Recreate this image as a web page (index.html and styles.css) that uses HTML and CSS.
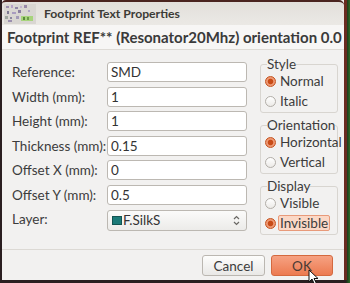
FILE: index.html
```html
<!DOCTYPE html>
<html>
<head>
<meta charset="utf-8">
<link rel="stylesheet" href="styles.css">
</head>
<body>
<div class="desk">
  <div class="window">
    <div class="titlebar">
      <svg class="appicon" width="32" height="20" viewBox="0 0 32 20">
        <rect width="32" height="20" fill="#d9d6d2"/>
        <rect x="2" y="2" width="3" height="2" fill="#9c8fb0"/>
        <rect x="7" y="1" width="2" height="3" fill="#b7a3c6"/>
        <rect x="11" y="3" width="3" height="2" fill="#8f86a6"/>
        <rect x="16" y="2" width="2" height="2" fill="#c4b3cf"/>
        <rect x="20" y="1" width="3" height="3" fill="#9a8aa9"/>
        <rect x="3" y="7" width="2" height="3" fill="#7f7a92"/>
        <rect x="8" y="8" width="4" height="2" fill="#a99cc0"/>
        <rect x="14" y="6" width="3" height="3" fill="#8c7fa1"/>
        <rect x="24" y="6" width="2" height="2" fill="#b0a4c4"/>
        <rect x="1" y="12" width="3" height="3" fill="#9fa7a0"/>
        <rect x="6" y="13" width="2" height="2" fill="#8b86a0"/>
        <rect x="12" y="12" width="3" height="3" fill="#a49bb8"/>
        <rect x="17" y="12" width="12" height="5" fill="#a7d47c"/>
        <rect x="19" y="13" width="2" height="3" fill="#5a8a3c"/>
        <rect x="23" y="13" width="2" height="3" fill="#6c9c48"/>
        <rect x="4" y="16" width="4" height="2" fill="#9c90b0"/>
      </svg>
      <span class="title">Footprint Text Properties</span>
    </div>
    <div class="header">Footprint REF** (Resonator20Mhz) orientation 0.0</div>
    <div class="content">
      <div class="form">
        <div class="row"><span class="label">Reference:</span><span class="input">SMD</span></div>
        <div class="row"><span class="label">Width (mm):</span><span class="input">1</span></div>
        <div class="row"><span class="label">Height (mm):</span><span class="input">1</span></div>
        <div class="row"><span class="label">Thickness (mm):</span><span class="input">0.15</span></div>
        <div class="row"><span class="label">Offset X (mm):</span><span class="input">0</span></div>
        <div class="row"><span class="label">Offset Y (mm):</span><span class="input">0.5</span></div>
        <div class="row"><span class="label">Layer:</span>
          <span class="combo"><span class="swatch"></span><span class="combo-text">F.SilkS</span>
            <svg class="spin" width="7" height="11" viewBox="0 0 7 11"><path d="M1 4 L3.5 1.5 L6 4" fill="none" stroke="#6a6864" stroke-width="1.2"/><path d="M1 7 L3.5 9.5 L6 7" fill="none" stroke="#6a6864" stroke-width="1.2"/></svg>
          </span>
        </div>
      </div>
      <div class="side">
        <fieldset class="group">
          <legend>Style</legend>
          <div class="radio-row"><span class="radio on"></span><span>Normal</span></div>
          <div class="radio-row"><span class="radio"></span><span>Italic</span></div>
        </fieldset>
        <fieldset class="group">
          <legend>Orientation</legend>
          <div class="radio-row"><span class="radio on"></span><span>Horizontal</span></div>
          <div class="radio-row"><span class="radio"></span><span>Vertical</span></div>
        </fieldset>
        <fieldset class="group">
          <legend>Display</legend>
          <div class="radio-row"><span class="radio"></span><span>Visible</span></div>
          <div class="radio-row"><span class="radio on"></span><span class="focus">Invisible</span></div>
        </fieldset>
      </div>
    </div>
    <div class="buttons">
      <span class="btn cancel">Cancel</span>
      <span class="btn ok">OK</span>
    </div>
  </div>
  <svg class="cursor" width="12" height="17" viewBox="0 0 12 17"><path d="M1 1 L1 13 L4 10 L6.5 15.5 L8.5 14.5 L6 9.5 L10 9.5 Z" fill="#ffffff" stroke="#111111" stroke-width="1" stroke-linejoin="round"/></svg>
</div>
</body>
</html>
```

FILE: styles.css
```css
html, body {
  margin: 0;
  padding: 0;
}
body {
  width: 350px;
  height: 283px;
  overflow: hidden;
  background: #221b1d;
  font-family: Lato, "Liberation Sans", sans-serif;
  color: #3c3c3c;
}
.desk {
  position: relative;
  width: 350px;
  height: 283px;
  background: linear-gradient(90deg, #2a1e20 0, #2a1e20 346px, #1d3a1c 347px, #2e6a25 350px);
}
.window {
  margin-left: 2px;
  width: 342px;
  height: 280px;
  border-right: 3px solid #6a2a20;
  display: flex;
  flex-direction: column;
  background: #f2f1f0;
  box-sizing: content-box;
}
.titlebar {
  height: 25px;
  box-sizing: border-box;
  border-top: 2px solid #4a2420;
  background: linear-gradient(#e2dfdb, #ebe9e5);
  border-radius: 4px 5px 0 0;
  display: flex;
  align-items: center;
  padding-left: 2px;
}
.appicon {
  display: block;
  margin-top: 1px;
}
.title {
  margin-left: 8px;
  font-weight: bold;
  font-size: 12.2px;
  color: #3c3b37;
  white-space: nowrap;
}
.header {
  height: 25px;
  box-sizing: border-box;
  background: #f7f6f5;
  border-bottom: 1px solid #dedbd6;
  padding-left: 5px;
  display: flex;
  align-items: center;
  font-weight: bold;
  font-size: 15px;
  color: #3a3a3a;
  white-space: nowrap;
}
.content {
  flex: 1;
  display: flex;
  justify-content: space-between;
  border-bottom: 1px solid #dcd9d4;
}
.form {
  padding-top: 12px;
  padding-left: 10px;
  display: flex;
  flex-direction: column;
  gap: 4.5px;
}
.row {
  display: flex;
  align-items: center;
  height: 20px;
  font-size: 13.5px;
}
.label {
  width: 95px;
  flex: none;
  white-space: nowrap;
}
.input {
  width: 140px;
  height: 20px;
  box-sizing: border-box;
  background: #ffffff;
  border: 1px solid #bcb8b2;
  border-radius: 3px;
  padding-left: 3px;
  display: flex;
  align-items: center;
  font-size: 13.5px;
  color: #333333;
}
.combo {
  width: 140px;
  height: 21px;
  margin-top: 2px;
  box-sizing: border-box;
  background: linear-gradient(#fbfbfa, #ecebe9);
  border: 1px solid #bcb8b2;
  border-radius: 3px;
  padding-left: 4px;
  padding-right: 6px;
  display: flex;
  align-items: center;
  color: #333333;
}
.swatch {
  width: 10px;
  height: 9px;
  background: #1b7a78;
  border: 1px solid #125452;
  box-sizing: border-box;
  margin-right: 1px;
}
.combo-text {
  flex: 1;
}
.spin {
  display: block;
}
.side {
  width: 78px;
  padding-top: 7px;
  margin-right: 6px;
  display: flex;
  flex-direction: column;
  gap: 5px;
}
.group {
  margin: 0;
  padding: 0 0 1px 4px;
  border: 1px solid #d8d5d0;
  border-radius: 3px;
  min-width: 0;
}
.group legend {
  padding: 0;
  margin-left: 2px;
  font-size: 13.5px;
  line-height: 14px;
  color: #3c3c3c;
}
.radio-row {
  height: 20px;
  display: flex;
  align-items: center;
  font-size: 13.5px;
  gap: 4px;
  white-space: nowrap;
}
.radio {
  width: 11px;
  height: 11px;
  box-sizing: border-box;
  border-radius: 50%;
  border: 1px solid #b2aea8;
  background: linear-gradient(#ffffff, #eceae7);
  flex: none;
}
.radio.on {
  border-color: #c4531f;
  background: radial-gradient(circle, #c84b17 0, #c84b17 2.3px, #f0a07c 3.3px, #e97c52 100%);
}
.focus {
  background: #fbd8c6;
  border: 1px solid #e89a7a;
  border-radius: 2px;
  padding: 0 1px;
  margin-left: -2px;
  line-height: 14px;
}
.buttons {
  height: 29px;
  display: flex;
  justify-content: flex-end;
  align-items: center;
  gap: 6px;
  padding-right: 11px;
  padding-top: 1px;
}
.btn {
  width: 63px;
  height: 21px;
  box-sizing: border-box;
  border-radius: 3px;
  display: flex;
  align-items: center;
  justify-content: center;
  font-size: 13.5px;
}
.cancel {
  background: linear-gradient(#fdfdfc, #e9e8e6);
  border: 1px solid #bbb7b1;
  color: #3c3c3c;
}
.ok {
  background: linear-gradient(#f6a283, #ec7a50);
  border: 1px solid #d4693f;
  color: #4a3a34;
  width: 62px;
}
.cursor {
  position: absolute;
  left: 308px;
  top: 269px;
}
```
